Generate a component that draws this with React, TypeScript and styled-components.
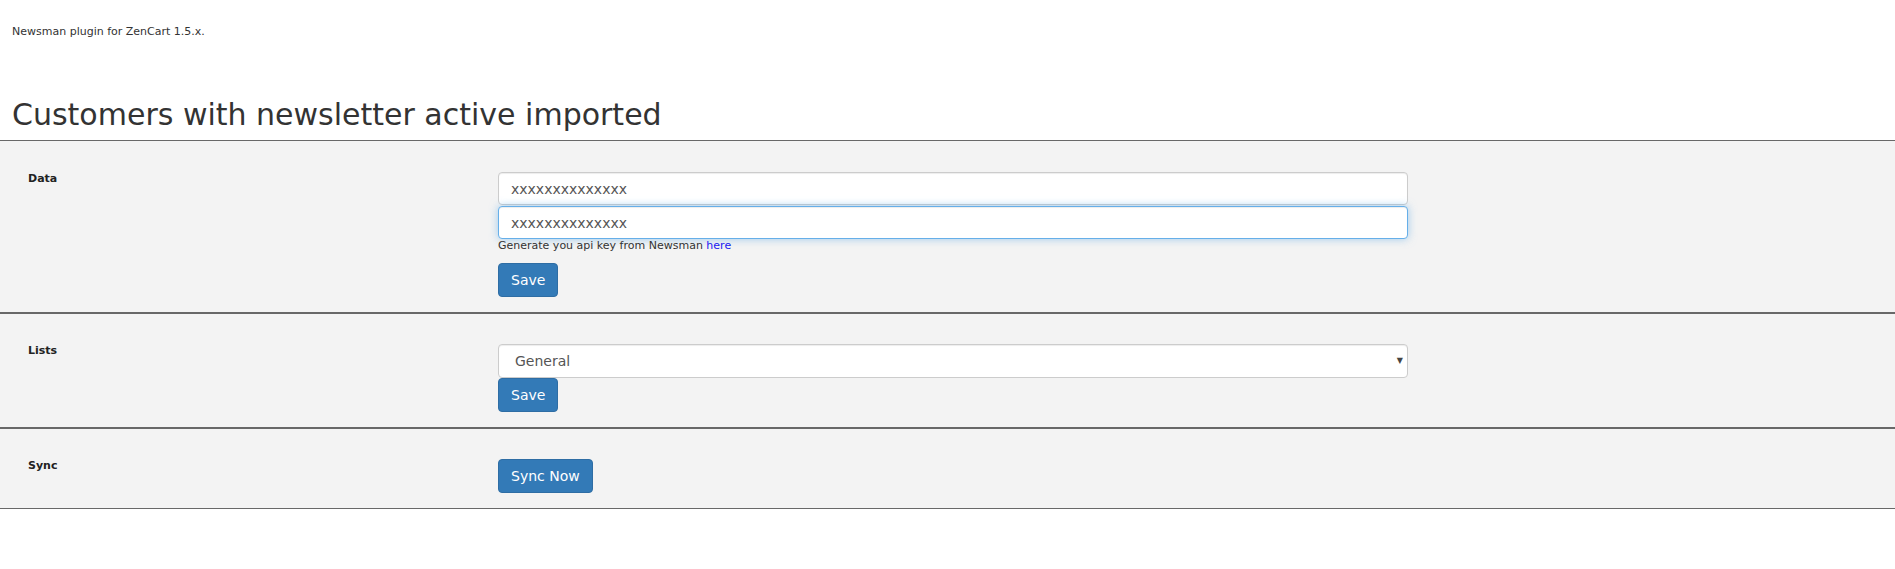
import React from "react";
import styled, { createGlobalStyle, css } from "styled-components";

const GlobalStyle = createGlobalStyle`
  html, body {
    margin: 0;
    padding: 0;
    background: #ffffff;
  }
  body {
    font-family: "DejaVu Sans", Verdana, sans-serif;
    color: #333333;
  }
  * {
    box-sizing: border-box;
  }
`;

const Page = styled.div`
  display: flex;
  flex-direction: column;
  width: 100%;
`;

const Intro = styled.p`
  margin: 0;
  padding: 25px 12px 0;
  font-size: 11px;
  line-height: 13px;
  color: #333333;
`;

const Title = styled.h1`
  margin: 60px 0 9px;
  padding: 0 12px;
  font-size: 30px;
  font-weight: normal;
  line-height: 33px;
  color: #333333;
`;

const Section = styled.section<{ $first?: boolean }>`
  display: grid;
  grid-template-columns: 470px 910px;
  align-items: start;
  padding: ${(p) => (p.$first ? "31px" : "30px")} 0 15px 28px;
  background: #f3f3f3;
  border-top: 1px solid #686868;
  border-bottom: 1px solid #686868;
`;

const Label = styled.div`
  font-size: 11px;
  font-weight: bold;
  line-height: 13px;
  color: #222222;
`;

const Field = styled.div`
  display: flex;
  flex-direction: column;
  align-items: flex-start;
`;

const TextInput = styled.input<{ $focused?: boolean; $stacked?: boolean }>`
  display: block;
  width: 910px;
  height: 33px;
  margin: ${(p) => (p.$stacked ? "1px 0 0" : "0")};
  padding: 6px 12px;
  font-family: "DejaVu Sans", Verdana, sans-serif;
  font-size: 14px;
  line-height: 20px;
  color: #555555;
  background: #ffffff;
  border: 1px solid #cccccc;
  border-radius: 4px;
  outline: none;
  box-shadow: inset 0 1px 1px rgba(0, 0, 0, 0.075);
  ${(p) =>
    p.$focused &&
    css`
      border-color: #66afe9;
      box-shadow: inset 0 1px 1px rgba(0, 0, 0, 0.075),
        0 0 8px rgba(102, 175, 233, 0.6);
    `}
`;

const Help = styled.div`
  font-size: 11px;
  line-height: 13px;
  color: #333333;
`;

const HelpLink = styled.a`
  color: #2020f0;
  text-decoration: none;
`;

const Button = styled.button<{ $spaced?: boolean }>`
  display: inline-flex;
  align-items: center;
  justify-content: center;
  height: 34px;
  margin-top: ${(p) => (p.$spaced ? "11px" : "0")};
  padding: 0 12px;
  font-family: "DejaVu Sans", Verdana, sans-serif;
  font-size: 14px;
  line-height: 20px;
  color: #ffffff;
  background: #337ab7;
  border: 1px solid #2e6da4;
  border-radius: 4px;
  cursor: pointer;
`;

const SelectWrap = styled.div`
  position: relative;
  width: 910px;
`;

const Select = styled.select`
  display: block;
  width: 100%;
  height: 34px;
  padding: 6px 24px 6px 16px;
  font-family: "DejaVu Sans", Verdana, sans-serif;
  font-size: 14px;
  line-height: 20px;
  color: #555555;
  background: #ffffff;
  border: 1px solid #cccccc;
  border-radius: 4px;
  outline: none;
  appearance: none;
  -webkit-appearance: none;
  box-shadow: inset 0 1px 1px rgba(0, 0, 0, 0.075);
`;

const Arrow = styled.span`
  position: absolute;
  right: 5px;
  top: 50%;
  transform: translateY(-50%);
  font-size: 8px;
  line-height: 8px;
  color: #444444;
  pointer-events: none;
`;

export default function App() {
  return (
    <>
      <GlobalStyle />
      <Page>
        <Intro>Newsman plugin for ZenCart 1.5.x.</Intro>
        <Title>Customers with newsletter active imported</Title>

        <Section $first>
          <Label>Data</Label>
          <Field>
            <TextInput type="text" defaultValue="xxxxxxxxxxxxxx" />
            <TextInput type="text" defaultValue="xxxxxxxxxxxxxx" $stacked $focused />
            <Help>
              Generate you api key from Newsman <HelpLink href="#">here</HelpLink>
            </Help>
            <Button type="button" $spaced>
              Save
            </Button>
          </Field>
        </Section>

        <Section>
          <Label>Lists</Label>
          <Field>
            <SelectWrap>
              <Select defaultValue="general">
                <option value="general">General</option>
              </Select>
              <Arrow>▼</Arrow>
            </SelectWrap>
            <Button type="button">Save</Button>
          </Field>
        </Section>

        <Section>
          <Label>Sync</Label>
          <Field>
            <Button type="button">Sync Now</Button>
          </Field>
        </Section>
      </Page>
    </>
  );
}
